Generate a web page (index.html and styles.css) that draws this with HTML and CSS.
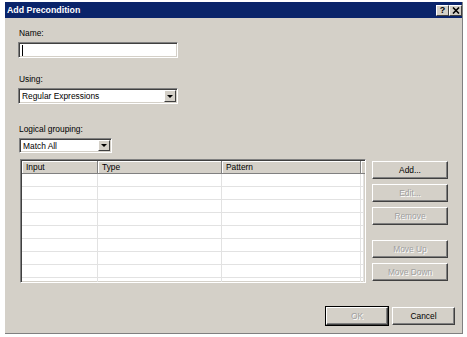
FILE: index.html
```html
<!DOCTYPE html>
<html>
<head>
    <link rel="stylesheet" href="styles.css">
</head>
<body>
    <div class="dialog">
        <div class="titlebar">
            <span class="title">Add Precondition</span>
            <div class="caption-btns">
                <div class="caption-btn">?</div>
                <div class="caption-btn">
                    <svg width="8" height="7" viewBox="0 0 8 7">
                        <path d="M1 0.5 L7 6.5 M7 0.5 L1 6.5" stroke="#000" stroke-width="1.6"/>
                    </svg>
                </div>
            </div>
        </div>
        <div class="content">
            <div class="label">Name:</div>
            <div class="textbox"><span class="caret"></span></div>

            <div class="label using">Using:</div>
            <div class="select wide">
                <span class="value">Regular Expressions</span>
                <span class="arrow"></span>
            </div>

            <div class="label grouping">Logical grouping:</div>
            <div class="select narrow">
                <span class="value">Match All</span>
                <span class="arrow"></span>
            </div>

            <div class="list-area">
                <div class="list">
                    <div class="grid">
                        <div class="head">Input</div>
                        <div class="head">Type</div>
                        <div class="head">Pattern</div>
                        <div class="head"></div>
                    </div>
                    <div class="grid rows" id="rows"></div>
                </div>
                <div class="side-btns">
                    <div class="btn">Add...</div>
                    <div class="btn disabled">Edit...</div>
                    <div class="btn disabled">Remove</div>
                    <div class="btn disabled move-up">Move Up</div>
                    <div class="btn disabled">Move Down</div>
                </div>
            </div>

            <div class="footer">
                <div class="btn disabled default">OK</div>
                <div class="btn cancel">Cancel</div>
            </div>
        </div>
    </div>
    <script>
        const rows = document.getElementById('rows');
        for (let i = 0; i < 9; i++) {
            for (let c = 0; c < 4; c++) {
                const cell = document.createElement('div');
                cell.className = 'cell';
                rows.appendChild(cell);
            }
        }
    </script>
</body>
</html>
```

FILE: styles.css
```css
* {
    box-sizing: border-box;
}

body {
    margin: 0;
    background: #fff;
    font-family: "Liberation Sans", Arial, sans-serif;
    font-size: 8.4px;
    color: #000;
}

.dialog {
    margin: 2px 0 0 5px;
    width: 458px;
    height: 332px;
    background: #d4d0c8;
    border-right: 1px solid #808080;
    border-bottom: 1px solid #808080;
    display: flex;
    flex-direction: column;
}

.titlebar {
    height: 16px;
    background: #0a246a;
    color: #fff;
    display: flex;
    align-items: center;
    justify-content: space-between;
    padding: 0 0 0 2px;
}

.title {
    font-weight: bold;
    font-size: 8.8px;
}

.caption-btns {
    display: flex;
}

.caption-btn {
    width: 13px;
    height: 11px;
    background: #d4d0c8;
    border: 1px solid;
    border-color: #fff #404040 #404040 #fff;
    display: flex;
    align-items: center;
    justify-content: center;
    color: #000;
    font-weight: bold;
    font-size: 9px;
    line-height: 9px;
}

.content {
    flex: 1;
    padding: 9px 7px 8px 13px;
    display: flex;
    flex-direction: column;
}

.label {
    line-height: 13px;
    margin: 0 0 2px 1px;
}

.label.using {
    margin-top: 15px;
}

.label.grouping {
    margin-top: 19px;
}

.textbox,
.select {
    height: 16px;
    background: #fff;
    border: 1px solid;
    border-color: #808080 #fff #fff #808080;
    box-shadow: inset 1px 1px #404040, inset -1px -1px #d4d0c8;
}

.textbox {
    width: 160px;
    padding: 2px 0 0 3px;
}

.caret {
    display: block;
    width: 1px;
    height: 11px;
    background: #000;
}

.select {
    display: flex;
    align-items: center;
    padding: 1px;
}

.select.wide {
    width: 160px;
}

.select.narrow {
    width: 93px;
    height: 15px;
    margin-left: 1px;
}

.select .value {
    flex: 1;
    padding-left: 2px;
}

.select .arrow {
    width: 12px;
    height: 100%;
    background: #d4d0c8;
    border: 1px solid;
    border-color: #fff #404040 #404040 #fff;
    display: flex;
    align-items: center;
    justify-content: center;
}

.select .arrow::after {
    content: "";
    border-left: 3px solid transparent;
    border-right: 3px solid transparent;
    border-top: 3px solid #000;
}

.list-area {
    display: flex;
    gap: 6px;
    margin-top: 6px;
    margin-left: 2px;
}

.list {
    width: 346px;
    height: 124px;
    background: #fff;
    overflow: hidden;
    border: 1px solid;
    border-color: #808080 #fff #fff #808080;
    box-shadow: inset 1px 1px #404040, inset -1px -1px #d4d0c8;
    padding: 1px;
}

.grid {
    display: grid;
    grid-template-columns: 76px 124px 139px 1fr;
}

.head {
    height: 13px;
    line-height: 12px;
    padding-left: 4px;
    background: #d4d0c8;
    border-right: 1px solid #808080;
    border-bottom: 1px solid #808080;
    box-shadow: inset 1px 1px #fff;
}

.cell {
    height: 13px;
    border-right: 1px solid #e2e2e2;
    border-bottom: 1px solid #e2e2e2;
}

.side-btns {
    display: flex;
    flex-direction: column;
    gap: 5px;
    padding-top: 2px;
}

.btn {
    width: 76px;
    height: 18px;
    background: #d4d0c8;
    border: 1px solid;
    border-color: #fff #404040 #404040 #fff;
    box-shadow: inset -1px -1px #808080;
    display: flex;
    align-items: center;
    justify-content: center;
}

.btn.disabled {
    color: #a0a0a0;
    text-shadow: 1px 1px #fff;
}

.btn.move-up {
    margin-top: 10px;
}

.footer {
    margin-top: auto;
    display: flex;
    justify-content: flex-end;
    gap: 4px;
}

.footer .btn {
    width: 63px;
}

.btn.default {
    width: 62px;
    outline: 1px solid #000;
}
```
